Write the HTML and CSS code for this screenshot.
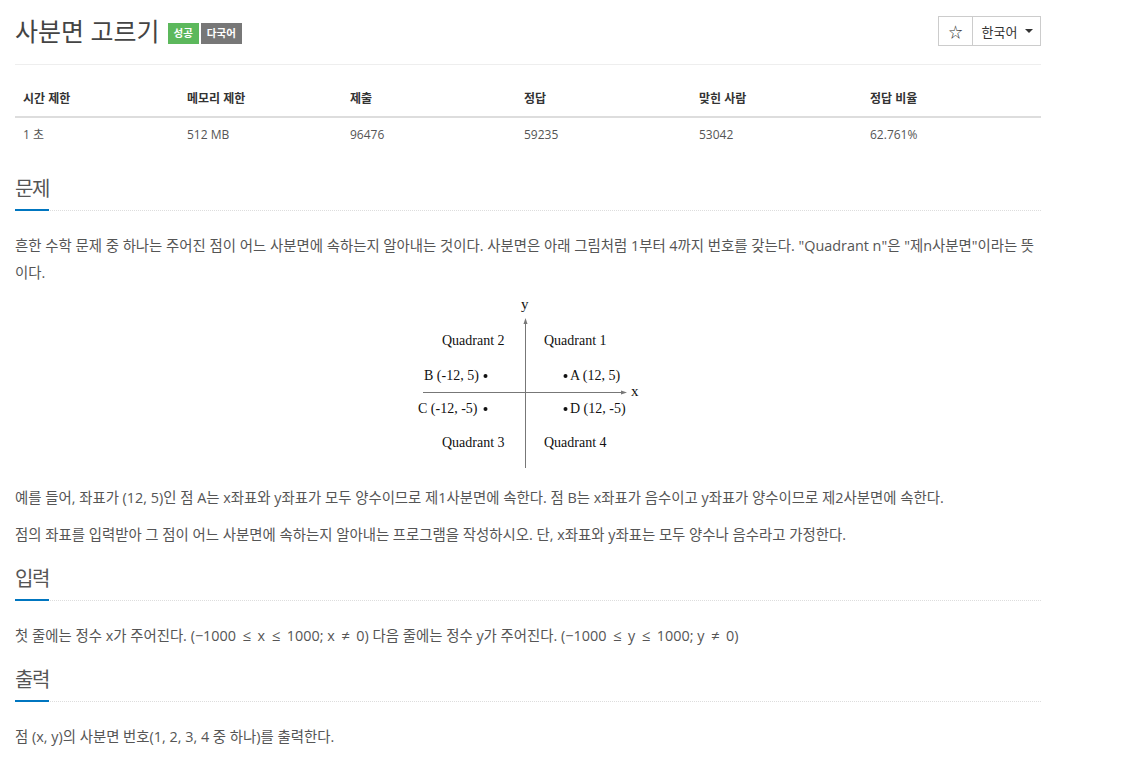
FILE: index.html
```html
<!DOCTYPE html>
<html lang="ko">
<head>
<meta charset="utf-8">
<title>사분면 고르기</title>
<link rel="stylesheet" href="styles.css">
</head>
<body>
<div class="container">
  <div class="page-header">
    <h1 class="title">사분면 고르기<span class="label label-success">성공</span><span class="label label-default">다국어</span></h1>
    <div class="btn-group">
      <button class="btn btn-star">☆</button>
      <button class="btn btn-lang">한국어 <span class="caret"></span></button>
    </div>
  </div>

  <table class="info-table">
    <thead>
      <tr>
        <th class="c1">시간 제한</th>
        <th class="c2">메모리 제한</th>
        <th class="c3">제출</th>
        <th class="c4">정답</th>
        <th class="c5">맞힌 사람</th>
        <th class="c6">정답 비율</th>
      </tr>
    </thead>
    <tbody>
      <tr>
        <td>1 초</td>
        <td>512 MB</td>
        <td>96476</td>
        <td>59235</td>
        <td>53042</td>
        <td>62.761%</td>
      </tr>
    </tbody>
  </table>

  <section class="problem-section">
    <h2 class="headline"><span>문제</span></h2>
    <div class="problem-text">
      <p>흔한 수학 문제 중 하나는 주어진 점이 어느 사분면에 속하는지 알아내는 것이다. 사분면은 아래 그림처럼 1부터 4까지 번호를 갖는다. "Quadrant n"은 "제n사분면"이라는 뜻이다.</p>
      <div class="figure">
        <svg width="230" height="176" viewBox="0 0 230 176" xmlns="http://www.w3.org/2000/svg">
          <g stroke="#777" stroke-width="1" fill="none">
            <line x1="112.5" y1="24" x2="112.5" y2="172"/>
            <line x1="10" y1="96.5" x2="211" y2="96.5"/>
          </g>
          <g fill="#777">
            <path d="M112.5 22 L110.5 28 L114.5 28 Z"/>
            <path d="M214 96.5 L208 94.5 L208 98.5 Z"/>
          </g>
          <g class="fig-text" fill="#111">
            <text x="108" y="13" class="axis-label">y</text>
            <text x="218" y="100" class="axis-label">x</text>
            <text x="29" y="49">Quadrant 2</text>
            <text x="131" y="49">Quadrant 1</text>
            <text x="11" y="84">B (-12, 5)</text>
            <text x="157" y="84">A (12, 5)</text>
            <text x="5" y="117">C (-12, -5)</text>
            <text x="157" y="117">D (12, -5)</text>
            <text x="29" y="151">Quadrant 3</text>
            <text x="131" y="151">Quadrant 4</text>
          </g>
          <g fill="#111">
            <circle cx="72.5" cy="80" r="2"/>
            <circle cx="152.5" cy="80" r="2"/>
            <circle cx="72.5" cy="113" r="2"/>
            <circle cx="152.5" cy="113" r="2"/>
          </g>
        </svg>
      </div>
      <p>예를 들어, 좌표가 (12, 5)인 점 A는 x좌표와 y좌표가 모두 양수이므로 제1사분면에 속한다. 점 B는 x좌표가 음수이고 y좌표가 양수이므로 제2사분면에 속한다.</p>
      <p>점의 좌표를 입력받아 그 점이 어느 사분면에 속하는지 알아내는 프로그램을 작성하시오. 단, x좌표와 y좌표는 모두 양수나 음수라고 가정한다.</p>
    </div>
  </section>

  <section class="problem-section">
    <h2 class="headline"><span>입력</span></h2>
    <div class="problem-text">
      <p>첫 줄에는 정수 x가 주어진다. (−1000<span class="rel">≤</span>x<span class="rel">≤</span>1000; x<span class="rel">≠</span>0) 다음 줄에는 정수 y가 주어진다. (−1000<span class="rel">≤</span>y<span class="rel">≤</span>1000; y<span class="rel">≠</span>0)</p>
    </div>
  </section>

  <section class="problem-section">
    <h2 class="headline"><span>출력</span></h2>
    <div class="problem-text">
      <p>점 (x, y)의 사분면 번호(1, 2, 3, 4 중 하나)를 출력한다.</p>
    </div>
  </section>
</div>
</body>
</html>
```

FILE: styles.css
```css
* { box-sizing: border-box; }
html, body { margin: 0; padding: 0; background: #fff; }
body {
  font-family: "Open Sans", "Noto Sans CJK KR", sans-serif;
  font-size: 14.4px;
  color: #555;
}
.container {
  width: 1026px;
  margin-left: 15px;
}
.page-header {
  display: flex;
  justify-content: space-between;
  align-items: flex-start;
  padding-top: 16px;
  padding-bottom: 18px;
  border-bottom: 1px solid #eee;
}
.title {
  margin: 0;
  font-size: 25px;
  font-weight: 400;
  color: #444;
  line-height: 30px;
  display: flex;
  align-items: center;
}
.label {
  display: inline-block;
  font-size: 10.5px;
  font-weight: 700;
  color: #fff;
  line-height: 21px;
  padding: 0 6px;
  margin-top: 5px;
}
.label-success { background: #5cb85c; margin-left: 8px; }
.label-default { background: #777; margin-left: 2px; }
.btn-group { display: flex; }
.btn {
  font-family: inherit;
  background: #fff;
  border: 1px solid #ccc;
  height: 30px;
  font-size: 13px;
  color: #333;
  padding: 0;
  display: flex;
  align-items: center;
  justify-content: center;
}
.btn-star { width: 35px; font-size: 14px; }
.btn-lang { width: 69px; margin-left: -1px; padding-left: 2px; }
.caret {
  display: inline-block;
  width: 0;
  height: 0;
  margin-left: 8px;
  border-top: 4px solid #333;
  border-left: 4px solid transparent;
  border-right: 4px solid transparent;
}
.info-table {
  width: 100%;
  border-collapse: collapse;
  margin-top: 17px;
  font-size: 12px;
}
.info-table th, .info-table td {
  text-align: left;
  padding: 8px;
  line-height: 18px;
}
.info-table th {
  color: #333;
  font-weight: 700;
  border-bottom: 2px solid #ddd;
}
.info-table td { color: #555; }
.c1 { width: 164px; }
.c2 { width: 163px; }
.c3 { width: 174px; }
.c4 { width: 175px; }
.c5 { width: 171px; }
.c6 { width: 179px; }
.problem-section { margin-top: 19px; }
.problem-section:first-of-type { margin-top: 25px; }
.headline {
  margin: 0;
  font-size: 20px;
  font-weight: 400;
  color: #555;
  line-height: 24px;
  border-bottom: 1px dotted #ddd;
  display: flex;
}
.headline span {
  display: inline-block;
  padding-bottom: 8px;
  letter-spacing: -1.5px;
  border-bottom: 2px solid #0076c0;
  margin-bottom: -1px;
}
.problem-text { padding-top: 21px; }
.problem-text p {
  margin: 0 0 10px 0;
  line-height: 27px;
}
.rel {
  font-size: 15px;
  margin: 0 6.5px;
}
.figure {
  display: flex;
  justify-content: center;
  margin: 10px 0 12px 0;
}
.fig-text text {
  font-family: "Liberation Serif", serif;
  font-size: 14px;
}
.fig-text .axis-label { font-size: 15px; }
```
